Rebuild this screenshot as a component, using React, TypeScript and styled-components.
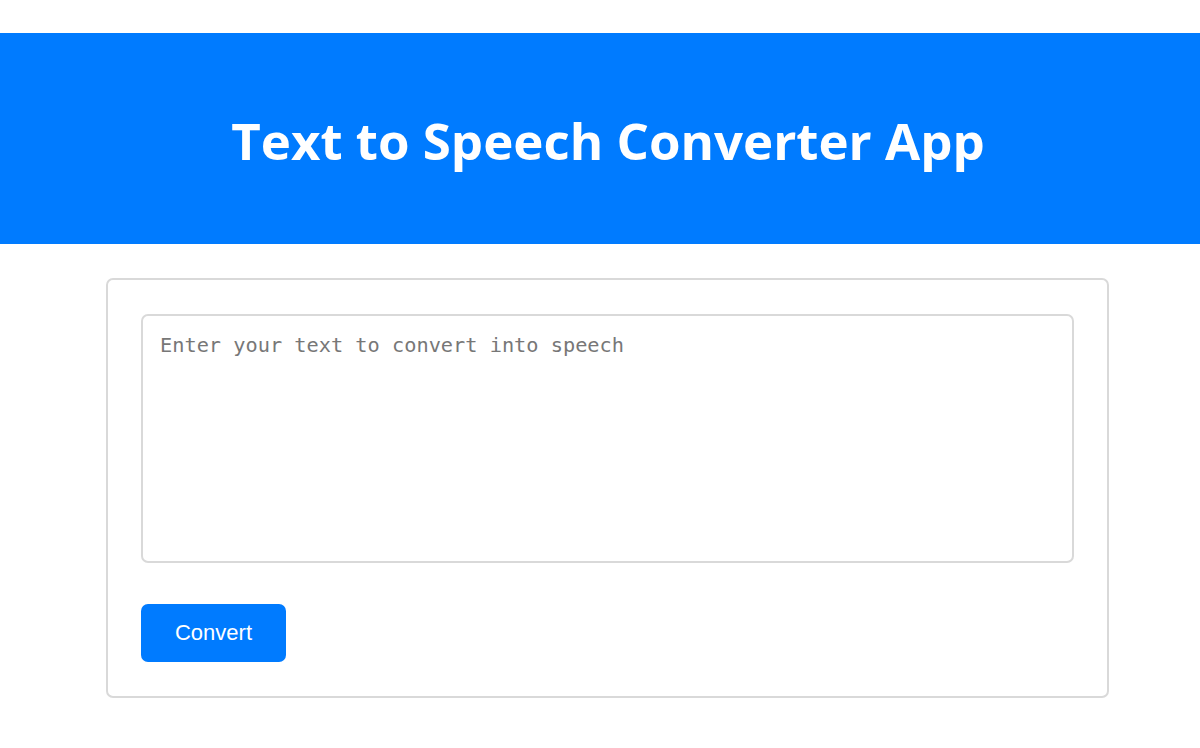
import React, { useState } from "react";
import styled, { createGlobalStyle } from "styled-components";

const GlobalStyle = createGlobalStyle`
  html, body {
    margin: 0;
    padding: 0;
    background: #fff;
  }
  body {
    font-family: "Liberation Sans", Arial, sans-serif;
  }
  * {
    box-sizing: border-box;
  }
`;

const Page = styled.div`
  padding-top: 33px;
`;

const Header = styled.header`
  background-color: #007bff;
  height: 211px;
  display: flex;
  align-items: center;
  justify-content: center;
  padding-left: 16px;
`;

const Title = styled.h1`
  margin: 0;
  color: #fff;
  font-family: "Open Sans", "Noto Sans", sans-serif;
  font-weight: 700;
  font-size: 51px;
  padding-top: 3px;
`;

const Main = styled.main`
  display: flex;
  justify-content: center;
  padding-top: 34px;
`;

const Card = styled.div`
  width: 1003px;
  margin-left: 15px;
  border: 2px solid #d9d9d9;
  border-radius: 7px;
  padding: 34px 33px 34px;
  display: flex;
  flex-direction: column;
  align-items: flex-start;
  gap: 41px;
`;

const TextArea = styled.textarea`
  width: 100%;
  height: 249px;
  border: 2px solid #d9d9d9;
  border-radius: 7px;
  padding: 17px 17px;
  resize: none;
  outline: none;
  font-family: "DejaVu Sans Mono", "Liberation Mono", monospace;
  font-size: 20.3px;
  color: #333;

  &::placeholder {
    color: #777;
  }
`;

const Button = styled.button`
  background-color: #007bff;
  color: #fff;
  border: none;
  border-radius: 7px;
  width: 145px;
  height: 58px;
  font-family: "Liberation Sans", Arial, sans-serif;
  font-size: 22px;
  cursor: pointer;
`;

export default function App() {
  const [text, setText] = useState("");

  const convert = () => {
    if (!text || typeof window === "undefined" || !("speechSynthesis" in window)) return;
    window.speechSynthesis.speak(new SpeechSynthesisUtterance(text));
  };

  return (
    <Page>
      <GlobalStyle />
      <Header>
        <Title>Text to Speech Converter App</Title>
      </Header>
      <Main>
        <Card>
          <TextArea
            placeholder="Enter your text to convert into speech"
            value={text}
            onChange={(e) => setText(e.target.value)}
          />
          <Button onClick={convert}>Convert</Button>
        </Card>
      </Main>
    </Page>
  );
}
